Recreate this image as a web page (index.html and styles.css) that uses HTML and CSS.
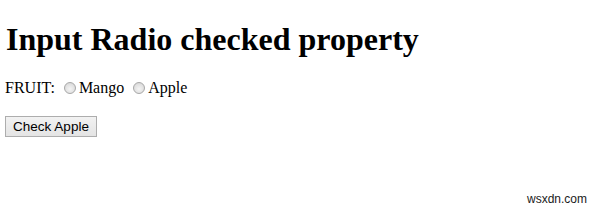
FILE: index.html
```html
<!DOCTYPE html>
<html>
<head>
<meta charset="utf-8">
<link rel="stylesheet" href="styles.css">
</head>
<body class="page">
<h1 class="title">Input Radio checked property</h1>
<p class="row">FRUIT: <input type="radio" name="fruit" class="radio"><span>Mango</span> <input type="radio" name="fruit" class="radio"><span>Apple</span></p>
<button class="btn">Check Apple</button>
<div class="mark">wsxdn.com</div>
</body>
</html>
```
FILE: styles.css
```css
html, body { margin: 0; padding: 0; }
.page {
  margin: 0;
  padding: 8px 5px;
  font-family: "Liberation Serif", "Times New Roman", serif;
  font-size: 16px;
  color: #000;
  background: #fff;
  height: 209px;
  box-sizing: border-box;
  position: relative;
}
.title {
  font-size: 32px;
  font-weight: bold;
  margin: 13px 0 21px 1px;
  line-height: 37px;
}
.row {
  margin: 0 0 19px 0;
  line-height: 18px;
}
.radio {
  -webkit-appearance: none;
  appearance: none;
  box-sizing: border-box;
  width: 12px;
  height: 12px;
  margin: 0 3px 0 5px;
  vertical-align: -1px;
  border: 1px solid #a8a8a8;
  border-radius: 50%;
  background: radial-gradient(circle at 50% 60%, #f4f4f4 0%, #e2e2e2 55%, #d0d0d0 100%);
}
.btn {
  font-family: "Liberation Sans", Arial, sans-serif;
  font-size: 13.5px;
  padding: 0;
  white-space: nowrap;
  border: 1px solid #adadad;
  background: linear-gradient(#f2f2f2, #e4e4e4);
  color: #000;
  border-radius: 0;
  height: 21px;
  width: 92px;
}
.mark {
  position: absolute;
  right: 12px;
  bottom: 3px;
  font-family: "Liberation Sans", Arial, sans-serif;
  font-size: 12px;
  line-height: 14px;
  color: #1a1a1a;
}
```
